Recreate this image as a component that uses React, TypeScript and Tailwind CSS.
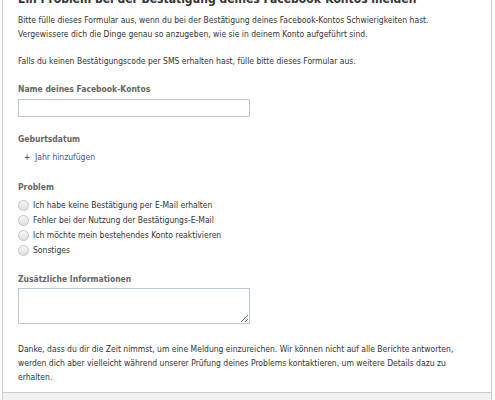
export default function App() {
  const options = [
    "Ich habe keine Bestätigung per E-Mail erhalten",
    "Fehler bei der Nutzung der Bestätigungs-E-Mail",
    "Ich möchte mein bestehendes Konto reaktivieren",
    "Sonstiges",
  ];

  return (
    <div className="h-[400px] overflow-hidden bg-white pl-[2px] font-['DejaVu_Sans_Condensed','Liberation_Sans',sans-serif] text-[8.5px] leading-[13.5px] text-[#333]">
      <div className="w-[490px] border-x border-[#ccc]">
        <div className="px-[15px] pb-[8px]">
          <h2 className="-mt-[11px] h-[20px] text-[12px] font-bold leading-[20px] text-[#333]">
            Ein Problem bei der Bestätigung deines Facebook-Kontos melden
          </h2>
          <p className="mt-[5px]">
            Bitte fülle dieses Formular aus, wenn du bei der Bestätigung deines Facebook-Kontos Schwierigkeiten hast.
            <br />
            Vergewissere dich die Dinge genau so anzugeben, wie sie in deinem Konto aufgeführt sind.
            <br />
            <br />
            Falls du keinen Bestätigungscode per SMS erhalten hast, fülle bitte dieses Formular aus.
          </p>

          <div className="mt-[15px] font-bold text-[#666]">Name deines Facebook-Kontos</div>
          <input type="text" className="mt-[2px] block h-[18px] w-[232px] border border-[#bdc7d8] bg-white outline-none" />

          <div className="mt-[16px] font-bold text-[#666]">Geburtsdatum</div>
          <a className="mt-[5px] flex items-center gap-[5px] pl-[6px] text-[#3b5998]">
            <span className="text-[8px] font-bold leading-none">+</span>
            <span>Jahr hinzufügen</span>
          </a>

          <div className="mt-[16px] font-bold text-[#666]">Problem</div>
          <div className="mt-[4px] flex flex-col">
            {options.map((o) => (
              <label key={o} className="flex h-[15px] items-center gap-[4px]">
                <span className="h-[11px] w-[11px] rounded-full border border-[#c4c4c4] bg-gradient-to-b from-[#f7f7f7] to-[#e0e0e0]" />
                <span>{o}</span>
              </label>
            ))}
          </div>

          <div className="mt-[15px] font-bold text-[#666]">Zusätzliche Informationen</div>
          <textarea className="mt-[1px] block h-[36px] w-[232px] border border-[#bdc7d8] bg-white outline-none" />

          <p className="mt-[18px] leading-[14px]">
            Danke, dass du dir die Zeit nimmst, um eine Meldung einzureichen. Wir können nicht auf alle Berichte antworten,
            werden dich aber vielleicht während unserer Prüfung deines Problems kontaktieren, um weitere Details dazu zu
            erhalten.
          </p>
        </div>
        <div className="h-[40px] border-t border-[#ccc] bg-[#f2f2f2]" />
      </div>
    </div>
  );
}
